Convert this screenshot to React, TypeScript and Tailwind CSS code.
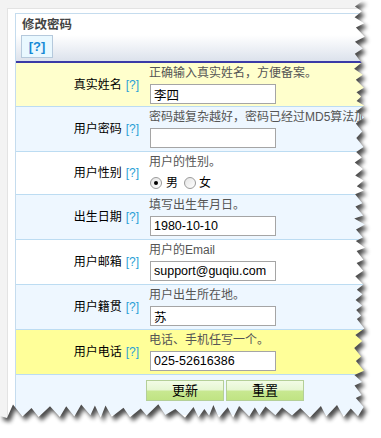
import React from "react";

type Row = {
  label: string;
  hint: string;
  value?: string;
  radio?: boolean;
  bg: string;
  h: string;
};

const rows: Row[] = [
  { label: "真实姓名", hint: "正确输入真实姓名，方便备案。", value: "李四", bg: "bg-[#ffffcc]", h: "h-[44px]" },
  { label: "用户密码", hint: "密码越复杂越好，密码已经过MD5算法加密。", value: "", bg: "bg-[#eef7ff]", h: "h-[45px]" },
  { label: "用户性别", hint: "用户的性别。", radio: true, bg: "bg-white", h: "h-[43px]" },
  { label: "出生日期", hint: "填写出生年月日。", value: "1980-10-10", bg: "bg-[#eef7ff]", h: "h-[45px]" },
  { label: "用户邮箱", hint: "用户的Email", value: "support@guqiu.com", bg: "bg-white", h: "h-[45px]" },
  { label: "用户籍贯", hint: "用户出生所在地。", value: "苏", bg: "bg-[#eef7ff]", h: "h-[45px]" },
  { label: "用户电话", hint: "电话、手机任写一个。", value: "025-52616386", bg: "bg-[#ffff99]", h: "h-[45px]" },
];

function rand(seed: number) {
  let s = seed;
  return () => {
    s = (s * 9301 + 49297) % 233280;
    return s / 233280;
  };
}

function buildKeep() {
  const r = rand(11);
  const pts: [number, number][] = [[0, 0]];
  let y = 0;
  let hi = true;
  while (y < 410) {
    pts.push([hi ? 361 + r() * 4 : 354 + r() * 3, y]);
    y += hi ? 3 + r() * 4 : 4 + r() * 6;
    hi = !hi;
  }
  let x = 358;
  hi = false;
  while (x > 0) {
    pts.push([x, hi ? 404 + r() * 5 : 415 + r() * 3]);
    x -= 4 + r() * 8;
    hi = !hi;
  }
  pts.push([0, 416]);
  return "M" + pts.map((p) => p[0].toFixed(1) + "," + p[1].toFixed(1)).join("L") + "Z";
}

function Radio({ checked }: { checked?: boolean }) {
  return (
    <span className="w-[12px] h-[12px] rounded-full border border-[#9a9a9a] bg-[linear-gradient(135deg,#e4e4e4,#ffffff)] flex items-center justify-center">
      {checked ? <span className="w-[4px] h-[4px] rounded-full bg-black" /> : null}
    </span>
  );
}

export default function App() {
  const keep = buildKeep();
  return (
    <div className="relative w-[381px] h-[438px] overflow-hidden bg-[#f3f3f3] pl-[7px] pt-[8px] font-['Liberation_Sans','Noto_Sans_CJK_SC',sans-serif]">
      <div className="h-full w-[380px] bg-white border-l border-t border-[#e3e3e3] pl-[7px] pt-[4px] overflow-hidden">
        <div className="w-[400px] border-l border-t border-[#c5dcee] bg-white">
          <div className="h-[21px] pl-[6px] flex items-center text-[12.5px] leading-[16px] font-bold text-[#444]">
            修改密码
          </div>
          <div className="h-[26px] bg-[linear-gradient(#ffffff,#dce2ec)] pl-[5px]">
            <div className="w-[32px] h-[23px] border border-[#b5c9dc] bg-[#e9f8ff] flex items-center justify-center text-[13px] font-bold text-[#168ad6]">
              [?]
            </div>
          </div>
          <div className="h-[2px] bg-[#3a3aa6]" />
          {rows.map((row) => (
            <div key={row.label} className={`flex border-b border-[#bcdcf2] ${row.bg} ${row.h}`}>
              <div className="w-[128px] shrink-0 flex items-center justify-end pr-[5px] text-[12px] leading-[16px] text-black">
                <span>{row.label}</span>
                <span className="ml-[4px] text-[#2a9fd6]">[?]</span>
              </div>
              <div className="flex flex-col pl-[5px] pt-[2px]">
                <div className="text-[12px] leading-[16px] text-[#555] whitespace-nowrap">{row.hint}</div>
                {row.radio ? (
                  <div className="mt-[3px] h-[20px] flex items-center text-[12px] text-black">
                    <span className="ml-[1px]"><Radio checked /></span>
                    <span className="ml-[4px]">男</span>
                    <span className="ml-[6px]"><Radio /></span>
                    <span className="ml-[3px]">女</span>
                  </div>
                ) : (
                  <input
                    readOnly
                    value={row.value}
                    className="mt-[3px] ml-[1px] w-[126px] h-[20px] border border-[#a5a5a5] bg-white px-[3px] text-[12.5px] leading-[18px] text-black outline-none font-['Liberation_Sans','Noto_Sans_CJK_SC',sans-serif]"
                  />
                )}
              </div>
            </div>
          ))}
          <div className="h-[40px] bg-[#eef7ff] flex pl-[130px] pt-[5px] gap-[2px]">
            <button className="w-[78px] h-[21px] border border-[#b4cf98] bg-[linear-gradient(#f2fce6_0%,#e6f6d2_48%,#c8e891_52%,#c0e483_100%)] text-[13px] leading-[19px] text-black">
              更新
            </button>
            <button className="w-[78px] h-[21px] border border-[#b4cf98] bg-[linear-gradient(#f2fce6_0%,#e6f6d2_48%,#c8e891_52%,#c0e483_100%)] text-[13px] leading-[19px] text-black">
              重置
            </button>
          </div>
        </div>
      </div>
      <svg className="absolute inset-0 pointer-events-none" width="381" height="438" viewBox="0 0 381 438">
        <defs>
          <filter id="blur" x="-10%" y="-10%" width="130%" height="130%">
            <feGaussianBlur stdDeviation="2.2" />
          </filter>
          <mask id="outside">
            <rect width="381" height="438" fill="white" />
            <path d={keep} fill="black" />
          </mask>
        </defs>
        <path fillRule="evenodd" d={`M0,0H381V438H0Z ${keep}`} fill="white" />
        <g mask="url(#outside)">
          <path d={keep} transform="translate(3,4)" fill="#000" opacity="0.7" filter="url(#blur)" />
        </g>
      </svg>
    </div>
  );
}
